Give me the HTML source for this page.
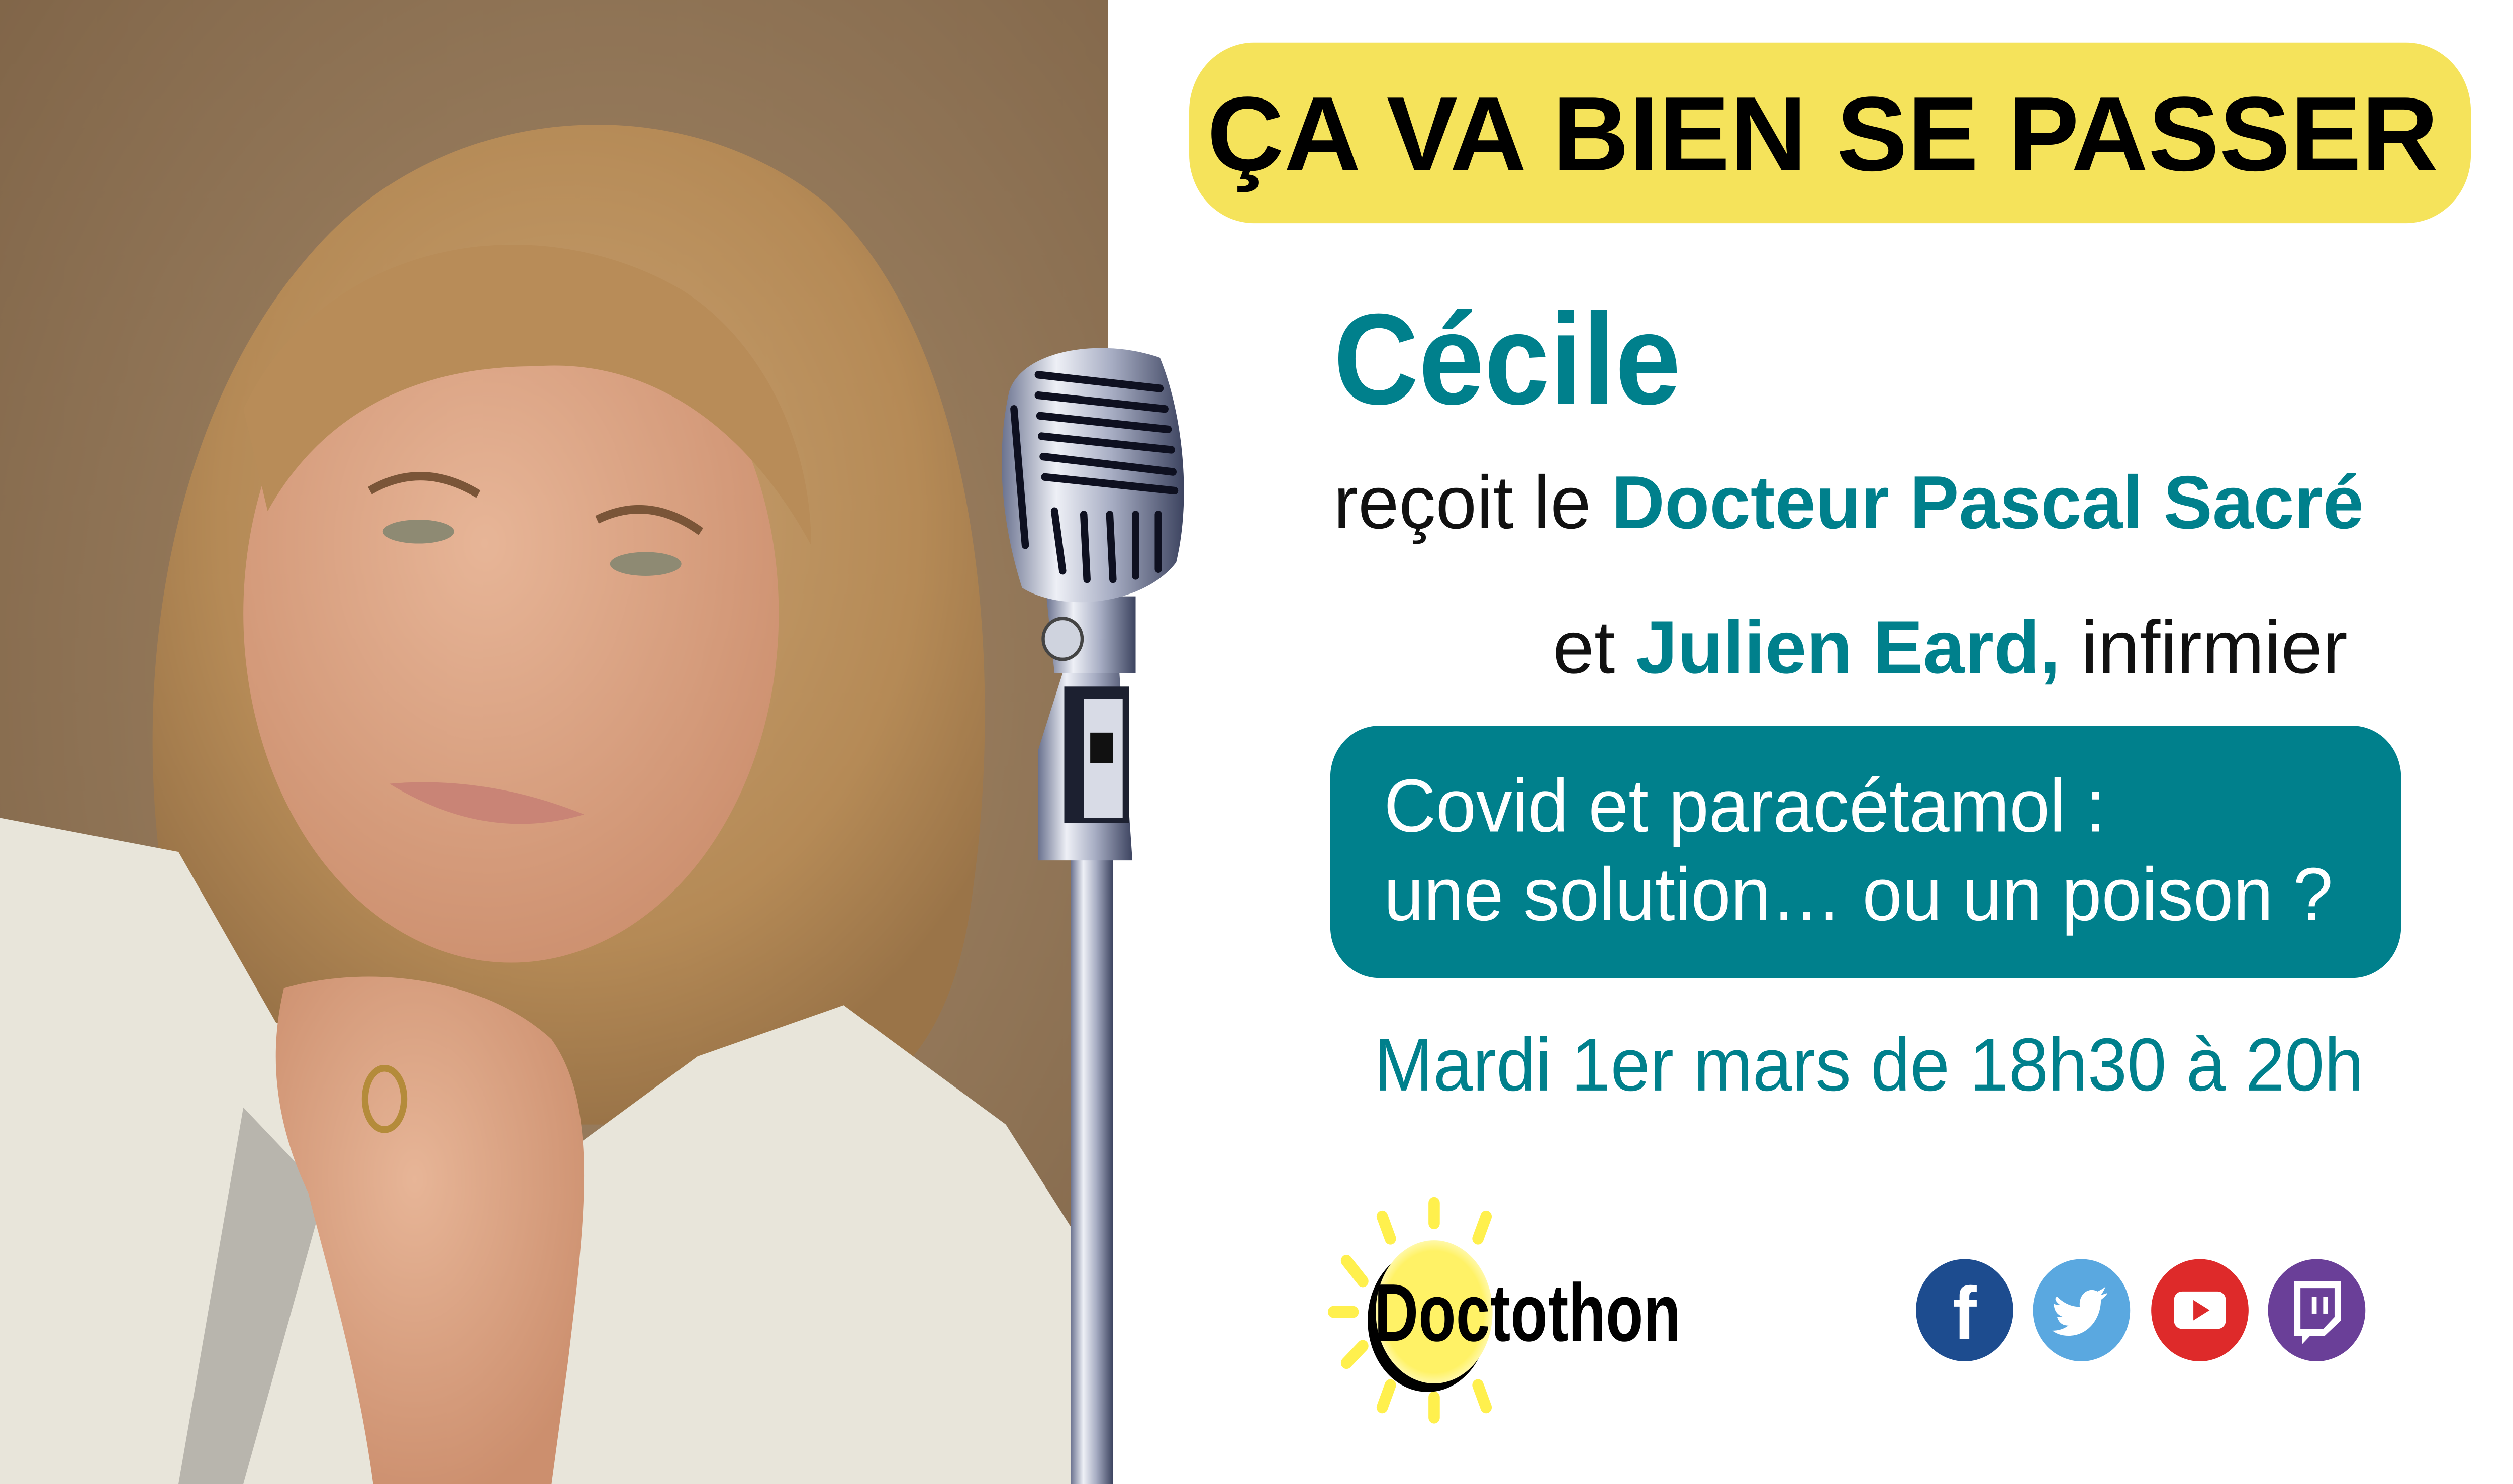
<!DOCTYPE html>
<html><head><meta charset="utf-8"><style>html,body{margin:0;padding:0;background:#fff;overflow:hidden;width:100%;height:100%}svg{display:block;position:fixed;left:0;top:0;width:100vw;height:100vh}</style></head>
<body>
<svg viewBox="0 0 1549 871" preserveAspectRatio="none" xmlns="http://www.w3.org/2000/svg" font-family="Liberation Sans, DejaVu Sans, sans-serif">
<defs>
<radialGradient id="bg" cx="0.55" cy="0.45" r="0.8"><stop offset="0" stop-color="#a68a69"/><stop offset="1" stop-color="#7c6145"/></radialGradient>
<radialGradient id="hair" cx="0.5" cy="0.4" r="0.6"><stop offset="0" stop-color="#c9a272"/><stop offset="0.7" stop-color="#b58a56"/><stop offset="1" stop-color="#9a7448"/></radialGradient>
<radialGradient id="skin" cx="0.45" cy="0.4" r="0.65"><stop offset="0" stop-color="#e7b597"/><stop offset="1" stop-color="#cc8f6e"/></radialGradient>
<linearGradient id="chrome" x1="0" x2="1"><stop offset="0" stop-color="#6b7390"/><stop offset="0.3" stop-color="#eef0f6"/><stop offset="0.6" stop-color="#a8aec4"/><stop offset="1" stop-color="#3d4460"/></linearGradient>
<radialGradient id="sun" cx="0.5" cy="0.5" r="0.5"><stop offset="0.85" stop-color="#fff266"/><stop offset="1" stop-color="#fff8a8"/></radialGradient>
</defs>
<rect x="0" y="0" width="683" height="871" fill="url(#bg)"/>
<path d="M120 600 C70 450 90 250 200 140 C280 60 420 50 510 120 C600 200 620 380 600 520 C590 600 560 640 500 660 L170 660 C140 650 125 630 120 600 Z" fill="url(#hair)"/>
<ellipse cx="315" cy="360" rx="165" ry="205" fill="url(#skin)"/>
<path d="M150 240 C200 140 330 120 420 170 C470 200 500 260 500 320 C460 250 400 210 330 215 C260 215 200 240 165 300 Z" fill="#b88c58"/>
<ellipse cx="258" cy="312" rx="22" ry="7" fill="#8e8a73"/>
<ellipse cx="398" cy="331" rx="22" ry="7" fill="#8e8a73"/>
<path d="M228 288 Q260 270 295 290" stroke="#7a5538" stroke-width="5" fill="none"/>
<path d="M368 305 Q400 290 432 312" stroke="#7a5538" stroke-width="5" fill="none"/>
<path d="M240 460 Q300 455 360 478 Q300 495 240 460 Z" fill="#c98476"/>
<path d="M0 480 L110 500 L170 600 L250 640 L330 690 L430 620 L520 590 L620 660 L660 720 L683 871 L0 871 Z" fill="#e8e5da"/>
<path d="M150 650 L200 700 L150 871 L110 871 Z" fill="#b8b5ad"/>
<path d="M175 580 C230 565 300 575 340 610 C370 650 360 720 350 800 L340 871 L230 871 C220 800 200 740 190 700 C170 660 165 620 175 580 Z" fill="url(#skin)"/>
<ellipse cx="237" cy="645" rx="12" ry="18" fill="none" stroke="#b48b3a" stroke-width="4"/>
<rect x="683" y="0" width="866" height="871" fill="#fff"/>
<rect x="660" y="490" width="26" height="381" fill="url(#chrome)"/>
<path d="M640 440 L655 395 L690 395 L698 505 L640 505 Z" fill="url(#chrome)"/>
<rect x="656" y="403" width="40" height="80" fill="#1c2030"/>
<rect x="668" y="410" width="24" height="70" fill="#d8dbe6"/>
<rect x="672" y="430" width="14" height="18" fill="#111"/>
<path d="M645 350 L700 350 L700 395 L650 395 Z" fill="url(#chrome)"/>
<circle cx="655" cy="375" r="12" fill="#cfd3de" stroke="#444" stroke-width="2"/>
<path d="M622 230 C630 205 680 198 715 210 C728 240 735 290 725 330 C705 355 655 360 630 345 C615 300 615 260 622 230 Z" fill="url(#chrome)"/>
<g stroke="#0e1020" stroke-width="4.5" fill="none" stroke-linecap="round">
<path d="M640 220 L715 228"/><path d="M640 232 L718 240"/><path d="M641 244 L720 252"/><path d="M642 256 L722 264"/><path d="M643 268 L723 277"/><path d="M644 280 L724 288"/>
<path d="M650 300 L655 335"/><path d="M668 302 L670 340"/><path d="M684 302 L686 340"/><path d="M700 302 L700 338"/><path d="M714 302 L714 334"/>
<path d="M625 240 L632 320"/>
</g>
<rect x="733" y="25" width="790" height="106" rx="40" fill="#f5e35b"/>
<text x="744" y="100" font-size="62" font-weight="bold" fill="#000" textLength="759" lengthAdjust="spacingAndGlyphs">ÇA VA BIEN SE PASSER</text>
<text x="822" y="237" font-size="76" font-weight="bold" fill="#00808c" textLength="214" lengthAdjust="spacingAndGlyphs">Cécile</text>
<text x="822" y="310" font-size="44" textLength="635" lengthAdjust="spacingAndGlyphs"><tspan fill="#111">reçoit le </tspan><tspan fill="#00808c" font-weight="bold">Docteur Pascal Sacré</tspan></text>
<text x="957" y="395" font-size="44" textLength="490" lengthAdjust="spacingAndGlyphs"><tspan fill="#111">et </tspan><tspan fill="#00808c" font-weight="bold">Julien Eard,</tspan><tspan fill="#111"> infirmier</tspan></text>
<rect x="820" y="426" width="660" height="148" rx="30" fill="#00808c"/>
<text x="853" y="488" font-size="44" fill="#fff" textLength="445" lengthAdjust="spacingAndGlyphs">Covid et paracétamol :</text>
<text x="853" y="540" font-size="44" fill="#fff" textLength="585" lengthAdjust="spacingAndGlyphs">une solution… ou un poison ?</text>
<text x="847" y="640" font-size="44" fill="#00808c" textLength="610" lengthAdjust="spacingAndGlyphs">Mardi 1er mars de 18h30 à 20h</text>
<g stroke="#fff04d" stroke-width="7" stroke-linecap="round">
<path d="M884 706 L884 718"/><path d="M884 820 L884 832"/>
<path d="M852 714 L857 727"/><path d="M916 714 L911 727"/>
<path d="M852 826 L857 813"/><path d="M916 826 L911 813"/>
<path d="M830 740 L840 752"/><path d="M830 800 L840 790"/>
<path d="M822 770 L834 770"/>
</g>
<ellipse cx="880" cy="775" rx="37" ry="42" fill="#000"/>
<ellipse cx="884" cy="770" rx="36" ry="42" fill="url(#sun)"/>
<text x="847" y="787" font-size="48" font-weight="bold" fill="#000" textLength="189" lengthAdjust="spacingAndGlyphs">Doctothon</text>
<circle cx="1211" cy="769" r="30" fill="#1d4c8f"/>
<text x="1211" y="786" font-size="44" font-weight="bold" fill="#fff" text-anchor="middle">f</text>
<circle cx="1283" cy="769" r="30" fill="#5aa8e0"/>
<path d="M1268 761 C1272 765 1277 767 1282 767 C1281 760 1287 755 1293 758 C1295 757 1297 756 1298 755 C1297 757 1296 759 1295 760 C1296 760 1298 759 1299 759 C1298 761 1296 762 1295 763 C1295 774 1287 784 1275 784 C1271 784 1268 783 1265 781 C1269 781 1272 780 1275 778 C1271 778 1269 776 1268 773 C1269 773 1271 773 1272 773 C1268 772 1266 769 1266 765 C1267 766 1269 766 1270 766 C1267 764 1266 762 1268 761 Z" fill="#fff"/>
<circle cx="1356" cy="769" r="30" fill="#de2a2a"/>
<rect x="1340" y="758" width="32" height="22" rx="5" fill="#fff"/>
<path d="M1352 763 L1362 769 L1352 775 Z" fill="#de2a2a"/>
<circle cx="1428" cy="769" r="30" fill="#6a3f98"/>
<path d="M1414 752 L1443 752 L1443 775 L1433 784 L1424 784 L1419 789 L1419 784 L1414 784 Z" fill="#fff"/>
<path d="M1418 756 L1439 756 L1439 773 L1432 780 L1418 780 Z" fill="#6a3f98"/>
<rect x="1425" y="761" width="3" height="10" fill="#fff"/><rect x="1432" y="761" width="3" height="10" fill="#fff"/>
</svg>
</body></html>
